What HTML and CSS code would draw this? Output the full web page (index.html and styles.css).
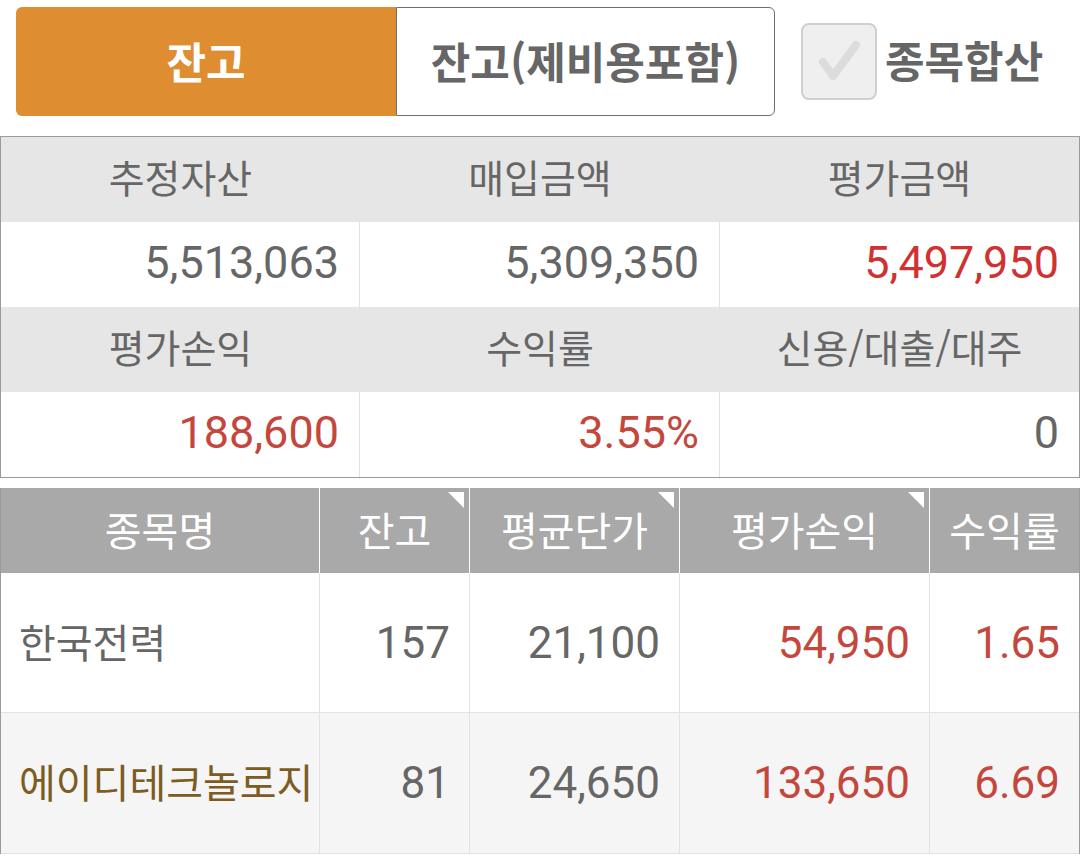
FILE: index.html
```html
<!DOCTYPE html>
<html lang="ko">
<head>
<meta charset="utf-8">
<link rel="stylesheet" href="styles.css">
</head>
<body>
<div class="topbar">
  <div class="tabs">
    <div class="tab tab-active">잔고</div>
    <div class="tab tab-idle">잔고(제비용포함)</div>
  </div>
  <div class="check">
    <svg viewBox="0 0 76 77" width="76" height="77"><path d="M22 39 L32 53 L55 22" fill="none" stroke="#dcdcdc" stroke-width="8" stroke-linecap="round" stroke-linejoin="round"/></svg>
  </div>
  <div class="check-label">종목합산</div>
</div>

<div class="summary">
  <div class="s-head">추정자산</div>
  <div class="s-head">매입금액</div>
  <div class="s-head">평가금액</div>
  <div class="s-val sep">5,513,063</div>
  <div class="s-val sep">5,309,350</div>
  <div class="s-val red-bright">5,497,950</div>
  <div class="s-head">평가손익</div>
  <div class="s-head">수익률</div>
  <div class="s-head">신용/대출/대주</div>
  <div class="s-val sep red">188,600</div>
  <div class="s-val sep red">3.55%</div>
  <div class="s-val">0</div>
</div>

<div class="holdings">
  <div class="h-head">종목명</div>
  <div class="h-head sortable">잔고</div>
  <div class="h-head sortable">평균단가</div>
  <div class="h-head sortable">평가손익</div>
  <div class="h-head last">수익률</div>

  <div class="h-cell name">한국전력</div>
  <div class="h-cell num">157</div>
  <div class="h-cell num">21,100</div>
  <div class="h-cell num red">54,950</div>
  <div class="h-cell num red last">1.65</div>

  <div class="h-cell name gold alt">에이디테크놀로지</div>
  <div class="h-cell num alt">81</div>
  <div class="h-cell num alt">24,650</div>
  <div class="h-cell num red alt">133,650</div>
  <div class="h-cell num red alt last">6.69</div>
</div>
</body>
</html>
```
FILE: styles.css
```css
html, body {
  margin: 0;
  padding: 0;
  background: #ffffff;
}
body {
  width: 1080px;
  height: 858px;
  overflow: hidden;
  font-family: "Roboto", "Noto Sans CJK KR", sans-serif;
  color: #666666;
}

.topbar {
  display: flex;
  align-items: center;
  padding: 7px 0 0 16px;
}
.tabs {
  display: flex;
  width: 759px;
  height: 109px;
}
.tab {
  flex: 1;
  display: flex;
  align-items: center;
  justify-content: center;
  font-family: "Noto Sans CJK KR", sans-serif;
  font-weight: 700;
  font-size: 43px;
  box-sizing: border-box;
  padding-bottom: 4px;
}
.tab-active {
  background: #df8d31;
  color: #ffffff;
  border-radius: 6px 0 0 6px;
  flex: 0 0 380px;
}
.tab-idle {
  background: #ffffff;
  color: #666666;
  border: 1px solid #6e6e6e;
  border-radius: 0 6px 6px 0;
}
.check {
  width: 76px;
  height: 77px;
  margin-left: 26px;
  box-sizing: border-box;
  border: 2px solid #cfcfcf;
  border-radius: 8px;
  background: #efefef;
  position: relative;
}
.check svg {
  position: absolute;
  left: -2px;
  top: -2px;
}
.check-label {
  margin-left: 8px;
  font-family: "Noto Sans CJK KR", sans-serif;
  font-weight: 700;
  font-size: 43px;
  color: #666666;
  padding-bottom: 6px;
}

.summary {
  margin-top: 20px;
  border: 1px solid #9a9a9a;
  display: grid;
  grid-template-columns: 359px 360px 359px;
  grid-auto-rows: 85px;
}
.s-head {
  background: #e6e6e6;
  display: flex;
  align-items: center;
  justify-content: center;
  font-family: "Noto Sans CJK KR", sans-serif;
  font-size: 39px;
  color: #666666;
  padding-bottom: 8px;
  box-sizing: border-box;
}
.s-val {
  background: #ffffff;
  display: flex;
  align-items: center;
  justify-content: flex-end;
  padding-right: 20px;
  font-size: 45px;
  color: #666666;
  box-sizing: border-box;
  padding-bottom: 4px;
}
.s-val.sep {
  border-right: 1px solid #e2e2e2;
}

.red { color: #c4473d; }
.red-bright { color: #d03232; }
.gold { color: #7c5c1f; }

.holdings {
  margin-top: 10px;
  border-left: 1px solid #9a9a9a;
  border-right: 1px solid #9a9a9a;
  display: grid;
  grid-template-columns: 319px 150px 210px 250px 149px;
  grid-template-rows: 85px 140px 141px;
}
.h-head {
  position: relative;
  background: #a9a9a9;
  color: #ffffff;
  display: flex;
  align-items: center;
  justify-content: center;
  font-family: "Noto Sans CJK KR", sans-serif;
  font-size: 40px;
  border-right: 1px solid #ffffff;
  box-sizing: border-box;
  padding-bottom: 4px;
}
.h-head.last { border-right: none; }
.sortable::after {
  content: "";
  position: absolute;
  top: 4px;
  right: 5px;
  width: 16px;
  height: 16px;
  background: #ffffff;
  clip-path: polygon(0 0, 100% 0, 100% 100%);
}
.h-cell {
  display: flex;
  align-items: center;
  box-sizing: border-box;
  border-right: 1px solid #e2e2e2;
  border-bottom: 1px solid #e2e2e2;
  background: #ffffff;
  font-size: 44px;
}
.h-cell.last { border-right: none; }
.h-cell.alt { background: #f5f5f5; }
.h-cell.name {
  justify-content: flex-start;
  padding-left: 18px;
  font-family: "Noto Sans CJK KR", sans-serif;
  font-size: 40px;
  padding-bottom: 4px;
}
.h-cell.num {
  justify-content: flex-end;
  padding-right: 19px;
}
```
